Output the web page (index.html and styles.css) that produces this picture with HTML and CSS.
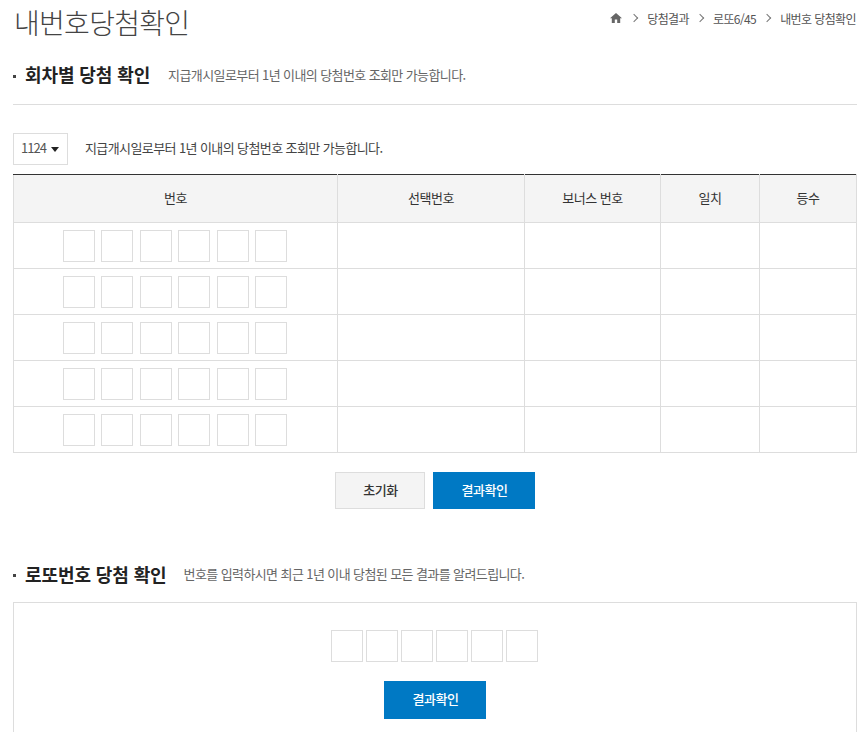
FILE: index.html

```html
<!DOCTYPE html>
<html lang="ko">
<head>
  <meta charset="UTF-8">
  <title>내번호당첨확인</title>
  <link rel="stylesheet" href="styles.css">
</head>
<body>

<div class="page">
  <div class="top">
    <h1>내번호당첨확인</h1>
    <div class="crumbs">
      <svg class="home" viewBox="0 0 12 10" width="12" height="10"><path d="M6 0 L12 5.2 H10.2 V10 H7.2 V6.6 H4.8 V10 H1.8 V5.2 H0 Z" fill="#666"/></svg>
      <span class="sep"></span><span>당첨결과</span>
      <span class="sep"></span><span>로또6/45</span>
      <span class="sep"></span><span>내번호 당첨확인</span>
    </div>
  </div>

  <div class="sec-title first">
    <h2>회차별 당첨 확인</h2>
    <p>지급개시일로부터 1년 이내의 당첨번호 조회만 가능합니다.</p>
  </div>

  <div class="pick">
    <div class="select">1124 <span class="arrow"></span></div>
    <p>지급개시일로부터 1년 이내의 당첨번호 조회만 가능합니다.</p>
  </div>

  <table class="result">
    <colgroup>
      <col class="c1"><col class="c2"><col class="c3"><col class="c4"><col class="c5">
    </colgroup>
    <tr><th>번호</th><th>선택번호</th><th>보너스 번호</th><th>일치</th><th>등수</th></tr>
    <tr><td><div class="nums"><i></i><i></i><i></i><i></i><i></i><i></i></div></td><td></td><td></td><td></td><td></td></tr>
    <tr><td><div class="nums"><i></i><i></i><i></i><i></i><i></i><i></i></div></td><td></td><td></td><td></td><td></td></tr>
    <tr><td><div class="nums"><i></i><i></i><i></i><i></i><i></i><i></i></div></td><td></td><td></td><td></td><td></td></tr>
    <tr><td><div class="nums"><i></i><i></i><i></i><i></i><i></i><i></i></div></td><td></td><td></td><td></td><td></td></tr>
    <tr><td><div class="nums"><i></i><i></i><i></i><i></i><i></i><i></i></div></td><td></td><td></td><td></td><td></td></tr>
  </table>

  <div class="btns">
    <button class="btn gray">초기화</button>
    <button class="btn blue">결과확인</button>
  </div>

  <div class="sec-title second">
    <h2>로또번호 당첨 확인</h2>
    <p>번호를 입력하시면 최근 1년 이내 당첨된 모든 결과를 알려드립니다.</p>
  </div>

  <div class="lookup">
    <div class="nums tight"><i></i><i></i><i></i><i></i><i></i><i></i></div>
    <button class="btn blue">결과확인</button>
  </div>
</div>

</body>
</html>
```

FILE: styles.css

```css
html, body { margin: 0; padding: 0; background: white; }
body { font-family: "Noto Sans CJK KR", "Noto Sans", sans-serif; color: #333; font-size: 13px; letter-spacing: -0.6px; }
.page {
  height: 732px;
  overflow: hidden;
  padding: 0 8px 0 13px;
  box-sizing: border-box;
}
.top {
  display: flex;
  justify-content: space-between;
  align-items: center;
  height: 46px;
}
h1 {
  margin: 0 0 2px 1px;
  font-size: 28px;
  font-weight: 300;
  letter-spacing: -0.7px;
  color: #444;
}
.crumbs {
  display: flex;
  align-items: center;
  font-size: 12px;
  color: #555;
  margin: 0 1px 10px 0;
}
.home { margin-right: 9px; }
.sep {
  width: 5px;
  height: 5px;
  border-top: 1px solid #777;
  border-right: 1px solid #777;
  transform: rotate(45deg);
  margin: 0 10px 0 8px;
}
.home + .sep { margin-left: 0; }
.sec-title {
  display: flex;
  align-items: center;
  position: relative;
  padding-left: 12px;
}
.sec-title::before {
  content: "";
  position: absolute;
  left: 0;
  top: 50%;
  width: 3px;
  height: 3px;
  background: #444;
}
.sec-title h2 { margin: 0; font-size: 18px; font-weight: 700; color: #222; letter-spacing: -0.1px; }
.sec-title p { margin: 0 0 0 17px; color: #666; font-size: 13px; }
.first {
  height: 56px;
  border-bottom: 1px solid #ddd;
  padding-bottom: 2px;
}
.first p { margin-left: 18px; }
.second { margin-top: 46px; height: 37px; }
.pick {
  display: flex;
  align-items: center;
  margin-top: 28px;
  height: 32px;
}
.pick p { margin: 0 0 4px 17px; color: #444; }
.select {
  width: 55px;
  height: 32px;
  box-sizing: border-box;
  border: 1px solid #ddd;
  padding-left: 7px;
  line-height: 28px;
  letter-spacing: -1px;
  color: #555;
}
.arrow {
  display: inline-block;
  margin-left: 2px;
  border-top: 5px solid #222;
  border-left: 4px solid transparent;
  border-right: 4px solid transparent;
  vertical-align: 1px;
}
.result {
  width: 844px;
  margin-top: 9px;
  border-collapse: collapse;
  table-layout: fixed;
  border-top: 1px solid #333;
}
.c1 { width: 324px; }
.c2 { width: 187px; }
.c3 { width: 136px; }
.c4 { width: 99px; }
.result th, .result td { border: 1px solid #ddd; padding: 0; text-align: center; }
.result tr:first-child th { border-top: 1px solid #333; padding-bottom: 3px; }
.result th { height: 44px; background: #f4f4f4; font-weight: 400; color: #333; letter-spacing: -0.5px; }
.result td { height: 45px; }
.nums { display: flex; justify-content: center; gap: 6.4px; padding-right: 1px; }
.nums i {
  display: block;
  width: 32px;
  height: 32px;
  box-sizing: border-box;
  border: 1px solid #ddd;
}
.tight { gap: 3px; }
.btns {
  display: flex;
  justify-content: center;
  gap: 8px;
  margin-top: 19px;
}
.btns .btn { height: 37px; }
.btn {
  font-family: inherit;
  font-size: 13px;
  font-weight: 500;
  letter-spacing: -0.5px;
  height: 38px;
  padding: 0 0 3px 1px;
  border-radius: 0;
}
.gray { width: 90px; background: #f4f4f4; border: 1px solid #ddd; color: #333; }
.blue { width: 102px; background: #0079c4; border: none; color: white; }
.lookup {
  margin-top: 10px;
  height: 200px;
  border: 1px solid #ddd;
  box-sizing: border-box;
  padding-top: 27px;
  display: flex;
  flex-direction: column;
  align-items: center;
  gap: 19px;
}
```
